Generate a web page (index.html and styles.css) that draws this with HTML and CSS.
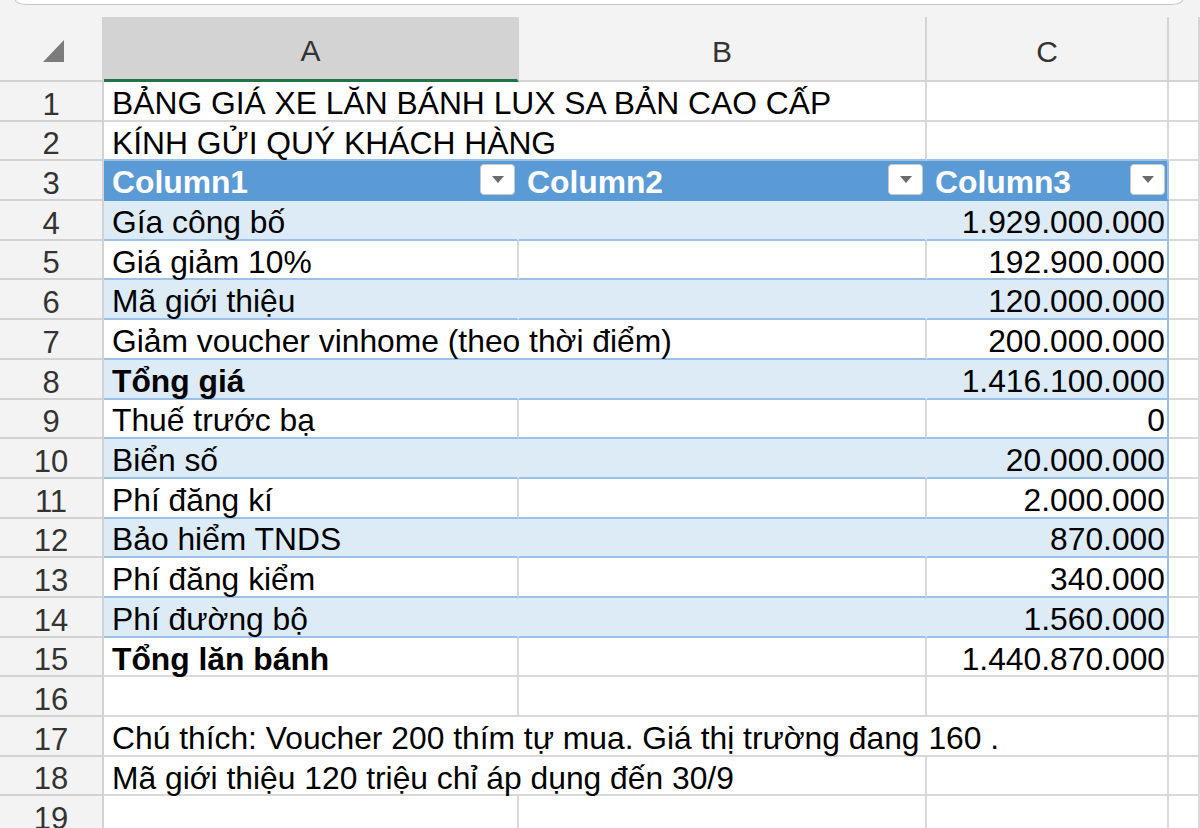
FILE: index.html
```html
<!DOCTYPE html>
<html lang="vi">
<head>
<meta charset="utf-8">
<title>Bảng giá xe</title>
<link rel="stylesheet" href="styles.css">
</head>
<body>
<div class="top"><div class="formula"></div></div>
<div class="sheet">
  <div class="corner"><svg width="21" height="22" viewBox="0 0 21 22"><polygon points="21,0 21,22 0,22" fill="#7b7b7b"/></svg></div>
  <div class="ch sel">A</div>
  <div class="ch">B</div>
  <div class="ch">C</div>
  <div class="ch"></div>

  <div class="rh">1</div>
  <div class="c span2">BẢNG GIÁ XE LĂN BÁNH LUX SA BẢN CAO CẤP</div>
  <div class="c"></div>
  <div class="c"></div>

  <div class="rh">2</div>
  <div class="c span2 above">KÍNH GỬI QUÝ KHÁCH HÀNG</div>
  <div class="c above"></div>
  <div class="c"></div>

  <div class="rh">3</div>
  <div class="c th"><span>Column1</span><span class="dd"><svg width="12" height="7" viewBox="0 0 12 7"><polygon points="0,0 12,0 6,7" fill="#6b6b6b"/></svg></span></div>
  <div class="c th"><span>Column2</span><span class="dd"><svg width="12" height="7" viewBox="0 0 12 7"><polygon points="0,0 12,0 6,7" fill="#6b6b6b"/></svg></span></div>
  <div class="c th last"><span>Column3</span><span class="dd"><svg width="12" height="7" viewBox="0 0 12 7"><polygon points="0,0 12,0 6,7" fill="#6b6b6b"/></svg></span></div>
  <div class="c"></div>

  <div class="rh">4</div>
  <div class="c t band">Gía công bố</div>
  <div class="c t band"></div>
  <div class="c t band last num">1.929.000.000</div>
  <div class="c"></div>

  <div class="rh">5</div>
  <div class="c t">Giá giảm 10%</div>
  <div class="c t"></div>
  <div class="c t last num">192.900.000</div>
  <div class="c"></div>

  <div class="rh">6</div>
  <div class="c t band">Mã giới thiệu</div>
  <div class="c t band"></div>
  <div class="c t band last num">120.000.000</div>
  <div class="c"></div>

  <div class="rh">7</div>
  <div class="c t span2">Giảm voucher vinhome (theo thời điểm)</div>
  <div class="c t last num">200.000.000</div>
  <div class="c"></div>

  <div class="rh">8</div>
  <div class="c t band bold">Tổng giá</div>
  <div class="c t band"></div>
  <div class="c t band last num">1.416.100.000</div>
  <div class="c"></div>

  <div class="rh">9</div>
  <div class="c t">Thuế trước bạ</div>
  <div class="c t"></div>
  <div class="c t last num">0</div>
  <div class="c"></div>

  <div class="rh">10</div>
  <div class="c t band">Biển số</div>
  <div class="c t band"></div>
  <div class="c t band last num">20.000.000</div>
  <div class="c"></div>

  <div class="rh">11</div>
  <div class="c t">Phí đăng kí</div>
  <div class="c t"></div>
  <div class="c t last num">2.000.000</div>
  <div class="c"></div>

  <div class="rh">12</div>
  <div class="c t band">Bảo hiểm TNDS</div>
  <div class="c t band"></div>
  <div class="c t band last num">870.000</div>
  <div class="c"></div>

  <div class="rh">13</div>
  <div class="c t">Phí đăng kiểm</div>
  <div class="c t"></div>
  <div class="c t last num">340.000</div>
  <div class="c"></div>

  <div class="rh">14</div>
  <div class="c t band">Phí đường bộ</div>
  <div class="c t band"></div>
  <div class="c t band last num">1.560.000</div>
  <div class="c"></div>

  <div class="rh">15</div>
  <div class="c bold">Tổng lăn bánh</div>
  <div class="c"></div>
  <div class="c num">1.440.870.000</div>
  <div class="c"></div>

  <div class="rh">16</div>
  <div class="c"></div>
  <div class="c"></div>
  <div class="c"></div>
  <div class="c"></div>

  <div class="rh">17</div>
  <div class="c span3">Chú thích: Voucher 200 thím tự mua. Giá thị trường đang 160 .</div>
  <div class="c"></div>

  <div class="rh">18</div>
  <div class="c span2">Mã giới thiệu 120 triệu chỉ áp dụng đến 30/9</div>
  <div class="c"></div>
  <div class="c"></div>

  <div class="rh">19</div>
  <div class="c"></div>
  <div class="c"></div>
  <div class="c"></div>
  <div class="c"></div>
</div>
</body>
</html>
```

FILE: styles.css
```css
html, body {
  margin: 0;
  padding: 0;
  background: #ffffff;
  overflow: hidden;
}

body {
  width: 1200px;
  height: 828px;
  font-family: "Liberation Sans", Arial, sans-serif;
  color: #000;
}

.top {
  height: 17px;
  background: #f3f3f3;
}

.formula {
  box-sizing: border-box;
  height: 5px;
  margin: 0 17px 0 15px;
  background: #ffffff;
  border: 1.5px solid #c6c6c6;
  border-top: none;
  border-radius: 0 0 12px 12px / 0 0 5px 5px;
}

.sheet {
  display: grid;
  grid-template-columns: 104px 415px 408px 242px 31px;
  grid-template-rows: 65px;
  grid-auto-rows: 39.7px;
}

.corner {
  box-sizing: border-box;
  background: #f3f3f3;
  border-right: 2px solid #d2d2d2;
  border-bottom: 2px solid #d2d2d2;
  display: flex;
  align-items: center;
  justify-content: center;
  padding: 5px 0 0 4px;
}

.corner svg {
  display: block;
}

.ch {
  box-sizing: border-box;
  background: #f3f3f3;
  border-right: 2px solid #d4d4d4;
  border-bottom: 2px solid #d4d4d4;
  display: flex;
  align-items: center;
  justify-content: center;
  padding-top: 6px;
  font-size: 30px;
  line-height: 30px;
  color: #333333;
}

.ch.sel {
  background: #d3d3d3;
  border-right-color: #d3d3d3;
  border-bottom: 3px solid #217346;
  padding-top: 5px;
}

.rh {
  box-sizing: border-box;
  background: #f3f3f3;
  border-right: 2px solid #d2d2d2;
  border-bottom: 2px solid #d2d2d2;
  display: flex;
  align-items: flex-end;
  justify-content: center;
  padding-bottom: 0;
  font-size: 31px;
  line-height: 31px;
  color: #333333;
}

.c {
  box-sizing: border-box;
  min-width: 0;
  border-right: 2px solid #d9d9d9;
  border-bottom: 2px solid #d9d9d9;
  display: flex;
  align-items: flex-end;
  padding: 0 2px 0 8px;
  font-size: 31.8px;
  line-height: 31.8px;
  white-space: nowrap;
}

.span2 { grid-column: span 2; }
.span3 { grid-column: span 3; }

.num { justify-content: flex-end; }

.bold { font-weight: bold; }

.above { border-bottom-color: #9bc2e6; }

.t { border-bottom-color: #9bc2e6; }

.t.band {
  background: #ddebf7;
  border-right-color: #ddebf7;
  border-bottom-color: #9bc2e6;
}

.t.last, .t.band.last { border-right-color: #9bc2e6; }

.th {
  background: #5b9bd5;
  color: #ffffff;
  font-weight: bold;
  border-right-color: #5b9bd5;
  border-bottom-color: #5b9bd5;
  justify-content: space-between;
  padding-right: 2px;
}

.th.last { border-right-color: #9bc2e6; }

.dd {
  box-sizing: border-box;
  width: 35px;
  height: 31px;
  margin-bottom: 4px;
  background: #ffffff;
  border: 1px solid #c9c9c9;
  border-radius: 4px;
  display: flex;
  align-items: center;
  justify-content: center;
}

.dd svg { display: block; }
```
